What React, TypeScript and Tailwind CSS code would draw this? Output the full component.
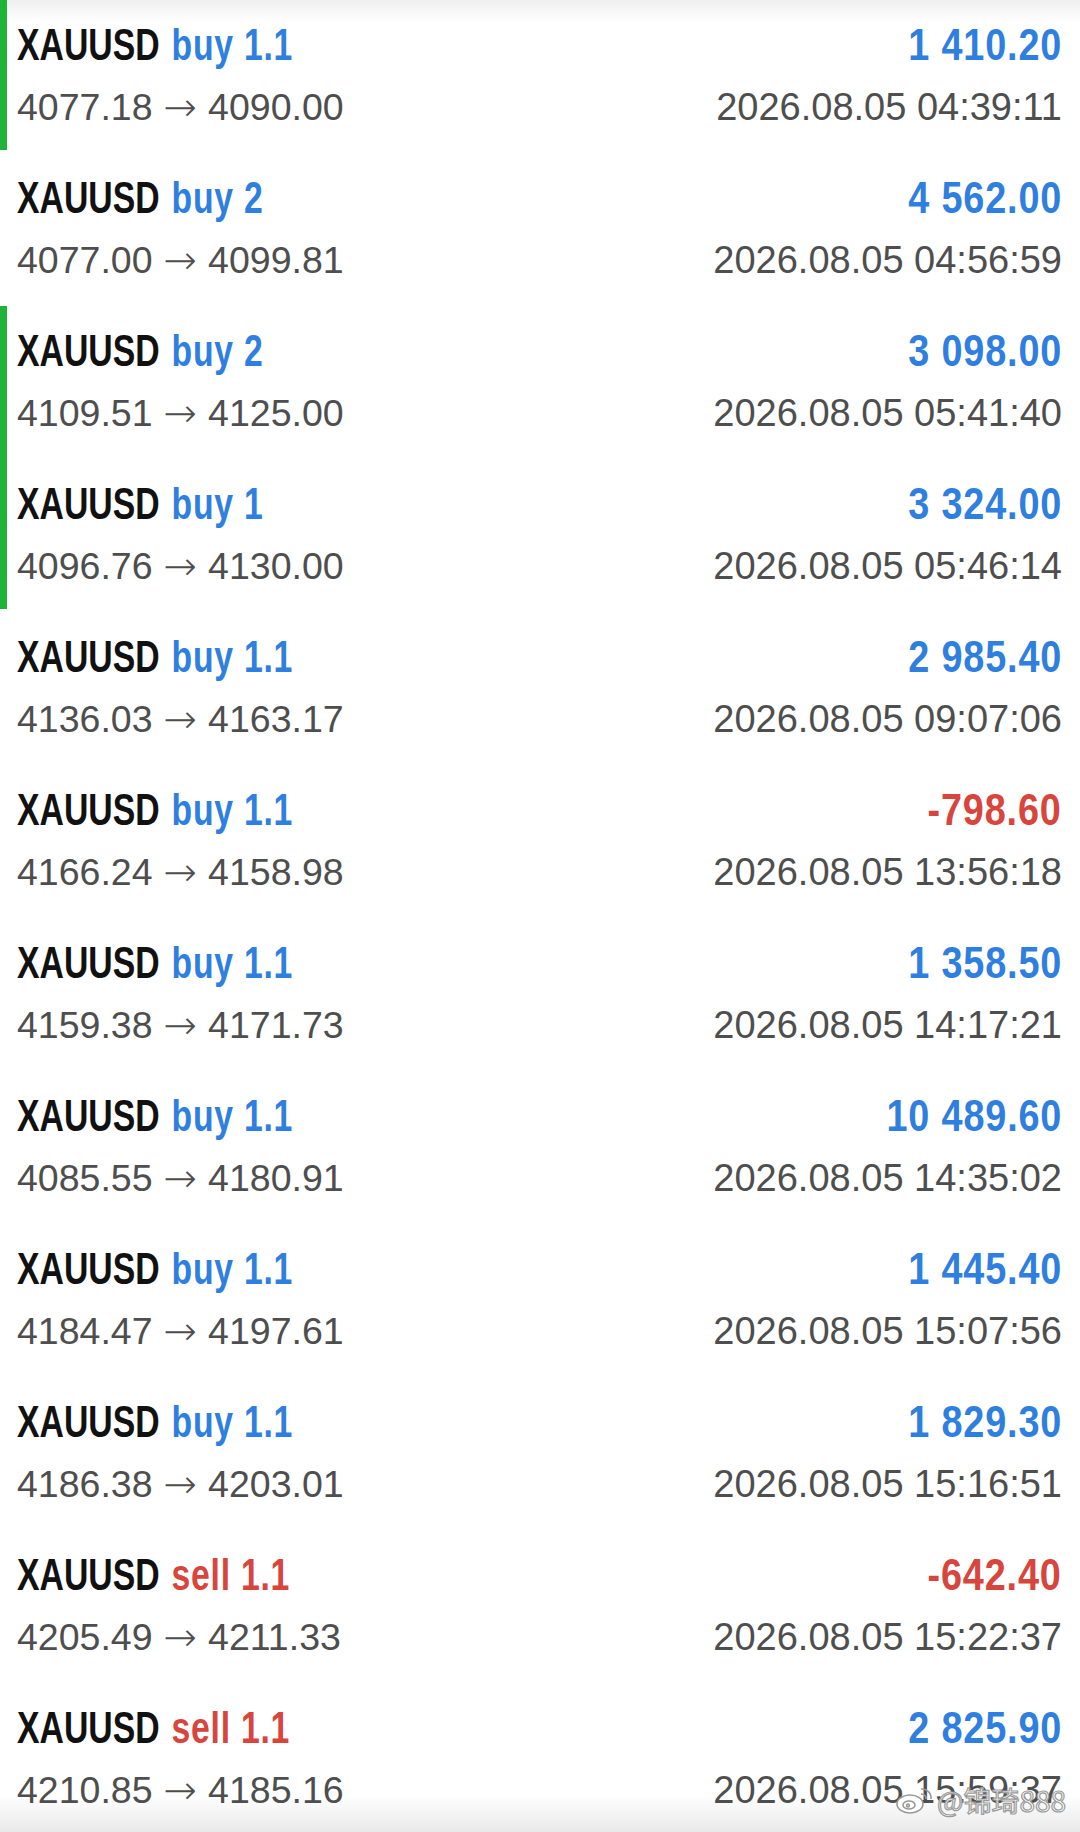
import React from "react";

type Trade = {
  side: "buy" | "sell";
  lot: string;
  open: string;
  close: string;
  profit: string;
  time: string;
  bar?: "gap" | "full";
};

const trades: Trade[] = [
  { side: "buy", lot: "1.1", open: "4077.18", close: "4090.00", profit: "1 410.20", time: "2026.08.05 04:39:11", bar: "gap" },
  { side: "buy", lot: "2", open: "4077.00", close: "4099.81", profit: "4 562.00", time: "2026.08.05 04:56:59" },
  { side: "buy", lot: "2", open: "4109.51", close: "4125.00", profit: "3 098.00", time: "2026.08.05 05:41:40", bar: "full" },
  { side: "buy", lot: "1", open: "4096.76", close: "4130.00", profit: "3 324.00", time: "2026.08.05 05:46:14", bar: "gap" },
  { side: "buy", lot: "1.1", open: "4136.03", close: "4163.17", profit: "2 985.40", time: "2026.08.05 09:07:06" },
  { side: "buy", lot: "1.1", open: "4166.24", close: "4158.98", profit: "-798.60", time: "2026.08.05 13:56:18" },
  { side: "buy", lot: "1.1", open: "4159.38", close: "4171.73", profit: "1 358.50", time: "2026.08.05 14:17:21" },
  { side: "buy", lot: "1.1", open: "4085.55", close: "4180.91", profit: "10 489.60", time: "2026.08.05 14:35:02" },
  { side: "buy", lot: "1.1", open: "4184.47", close: "4197.61", profit: "1 445.40", time: "2026.08.05 15:07:56" },
  { side: "buy", lot: "1.1", open: "4186.38", close: "4203.01", profit: "1 829.30", time: "2026.08.05 15:16:51" },
  { side: "sell", lot: "1.1", open: "4205.49", close: "4211.33", profit: "-642.40", time: "2026.08.05 15:22:37" },
  { side: "sell", lot: "1.1", open: "4210.85", close: "4185.16", profit: "2 825.90", time: "2026.08.05 15:59:37" },
];

const bold = "font-['Liberation_Sans','Arial',sans-serif]";
const reg = "font-['Liberation_Sans','Arial',sans-serif]";

function Row({ t }: { t: Trade }) {
  const neg = t.profit.startsWith("-");
  return (
    <div className="relative flex h-[153px] shrink-0 items-start justify-between pl-[17px] pr-[18px]">
      {t.bar === "gap" && <div className="absolute left-0 top-0 bottom-[3px] w-[7px] bg-[#1fb33a]" />}
      {t.bar === "full" && <div className="absolute left-0 top-0 bottom-0 w-[7px] bg-[#1fb33a]" />}
      <div className="flex flex-col pt-[21px]">
        <div className={`${bold} flex origin-left scale-x-[0.75] gap-[16px] whitespace-nowrap text-[45px] leading-[48px] font-bold`}>
          <span className="text-[#111111]">XAUUSD</span>
          <span className={`tracking-[1px] ${t.side === "buy" ? "text-[#2f7fe0]" : "text-[#d8453c]"}`}>
            {t.side} {t.lot}
          </span>
        </div>
        <div className={`${reg} mt-[18px] flex items-center whitespace-nowrap text-[37.5px] leading-[40px] text-[#4e4e4e]`}>
          <span>{t.open}</span>
          <span className="mx-[11px] font-['DejaVu_Sans',sans-serif] text-[40px] font-extralight">→</span>
          <span>{t.close}</span>
        </div>
      </div>
      <div className="flex flex-col items-end pt-[21px]">
        <div
          className={`${bold} origin-right scale-x-[0.84] whitespace-nowrap text-[45px] leading-[48px] font-bold tracking-[1px] ${
            neg ? "text-[#d8453c]" : "text-[#2f7fe0]"
          }`}
        >
          {t.profit}
        </div>
        <div className={`${reg} mt-[18px] whitespace-nowrap text-[38px] leading-[40px] text-[#4e4e4e]`}>{t.time}</div>
      </div>
    </div>
  );
}

function WeiboLogo() {
  return (
    <svg width="40" height="30" viewBox="0 0 40 30" fill="none" stroke="#9a9a9a" strokeWidth="1.6">
      <ellipse cx="15" cy="19" rx="13" ry="9" fill="#ffffff" />
      <ellipse cx="14" cy="20" rx="6" ry="4" />
      <circle cx="13" cy="20.5" r="1.4" />
      <path d="M26 4 a9 9 0 0 1 10 10" />
      <path d="M26 9 a4.5 4.5 0 0 1 5 5" />
    </svg>
  );
}

export default function App() {
  return (
    <div className="relative flex h-[1832px] w-[1080px] flex-col overflow-hidden bg-[linear-gradient(to_bottom,#efefef_0px,#ffffff_22px,#ffffff_1795px,#e9e9e9_1832px)]">
      {trades.map((t, i) => (
        <Row key={i} t={t} />
      ))}
      <div className="absolute bottom-[16px] right-[14px] flex items-center gap-[2px]">
        <WeiboLogo />
        <span className="font-['Noto_Sans_CJK_SC','Noto_Sans',sans-serif] text-[28px] leading-[32px] text-white [-webkit-text-stroke:1.2px_#9a9a9a]">
          @锦琦888
        </span>
      </div>
    </div>
  );
}
